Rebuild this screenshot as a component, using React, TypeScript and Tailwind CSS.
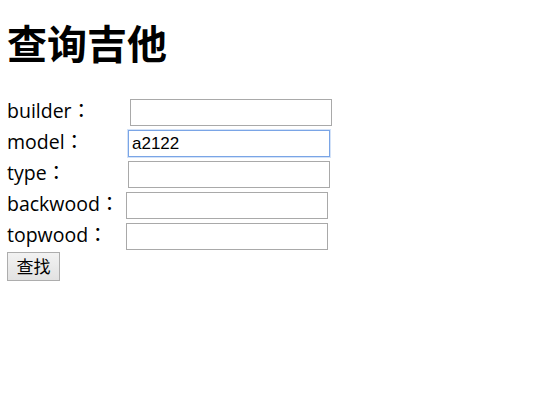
import React from "react";

function Row({ label, w, value, focus }: { label: string; w: string; value?: string; focus?: boolean }) {
  return (
    <div className="flex items-center h-[31px]">
      <span className={`${w} shrink-0 pb-[3px] text-[19.5px] leading-none text-black whitespace-nowrap font-['Open_Sans','Noto_Sans_CJK_TC',sans-serif]`}>
        {label}
      </span>
      <input
        readOnly
        defaultValue={value}
        className={`w-[202px] h-[27px] px-[3px] text-[17px] text-black bg-white outline-none font-['Liberation_Sans',Arial,sans-serif] ${
          focus ? "border border-[#7aa5e6] shadow-[0_0_0_1px_#d3e2f8]" : "border border-[#a9a9a9]"
        }`}
      />
    </div>
  );
}

export default function App() {
  return (
    <div className="w-[553px] h-[406px] bg-white px-[7px] font-['Open_Sans','Noto_Sans_CJK_SC',sans-serif]">
      <h1 className="pt-[21px] text-[40px] font-bold leading-[46px] text-black">查询吉他</h1>
      <div className="mt-[30px] flex flex-col">
        <Row label="builder：" w="w-[123px]" />
        <Row label="model：" w="w-[121px]" value="a2122" focus />
        <Row label="type：" w="w-[121px]" />
        <Row label="backwood：" w="w-[119px]" />
        <Row label="topwood：" w="w-[119px]" />
      </div>
      <button className="w-[53px] h-[29px] border border-[#adadad] bg-[linear-gradient(#f2f2f2,#e2e2e2)] text-[17px] text-black leading-none">
        查找
      </button>
    </div>
  );
}
